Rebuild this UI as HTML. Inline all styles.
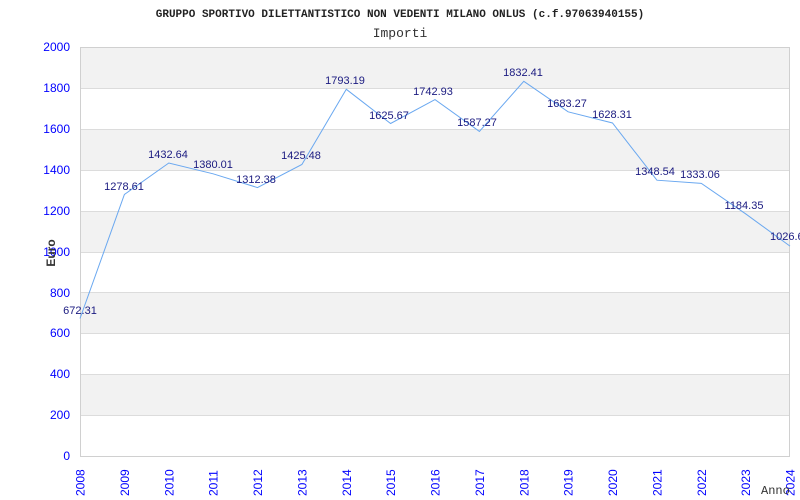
<!DOCTYPE html>
<html><head><style>body{margin:0;background:#fff}svg{display:block}</style></head><body>
<svg width="800" height="500" xmlns="http://www.w3.org/2000/svg">
<rect width="800" height="500" fill="#fff"/>
<g fill="#f2f2f2">
<rect x="80" y="47" width="710" height="41"/>
<rect x="80" y="129" width="710" height="41"/>
<rect x="80" y="211" width="710" height="41"/>
<rect x="80" y="292" width="710" height="41"/>
<rect x="80" y="374" width="710" height="41"/>
</g>
<g stroke="#dcdcdc" stroke-width="1">
<line x1="80" y1="88.5" x2="790" y2="88.5"/><line x1="80" y1="129.5" x2="790" y2="129.5"/>
<line x1="80" y1="170.5" x2="790" y2="170.5"/><line x1="80" y1="211.5" x2="790" y2="211.5"/>
<line x1="80" y1="252.5" x2="790" y2="252.5"/><line x1="80" y1="292.5" x2="790" y2="292.5"/>
<line x1="80" y1="333.5" x2="790" y2="333.5"/><line x1="80" y1="374.5" x2="790" y2="374.5"/>
<line x1="80" y1="415.5" x2="790" y2="415.5"/>
</g>
<rect x="80.5" y="47.5" width="709" height="409" fill="none" stroke="#d0d0d0"/>
<text x="400" y="17" text-anchor="middle" font-family="Liberation Mono,monospace" font-size="11" font-weight="bold" fill="#222">GRUPPO SPORTIVO DILETTANTISTICO NON VEDENTI MILANO ONLUS (c.f.97063940155)</text>
<text x="400" y="37" text-anchor="middle" font-family="Liberation Mono,monospace" font-size="13" fill="#333">Importi</text>
<g font-family="Liberation Sans,sans-serif" font-size="12" fill="#0000ff" text-anchor="end">
<text x="70" y="51">2000</text><text x="70" y="92">1800</text><text x="70" y="133">1600</text>
<text x="70" y="174">1400</text><text x="70" y="215">1200</text><text x="70" y="256">1000</text>
<text x="70" y="297">800</text><text x="70" y="337">600</text><text x="70" y="378">400</text>
<text x="70" y="419">200</text><text x="70" y="460">0</text>
</g>
<text transform="translate(55,253) rotate(-90)" text-anchor="middle" font-family="Liberation Sans,sans-serif" font-size="12" font-weight="bold" fill="#333">Euro</text>
<g font-family="Liberation Sans,sans-serif" font-size="12" fill="#0000ff">
<text transform="translate(84.5,496) rotate(-90)">2008</text>
<text transform="translate(128.9,496) rotate(-90)">2009</text>
<text transform="translate(173.3,496) rotate(-90)">2010</text>
<text transform="translate(217.6,496) rotate(-90)">2011</text>
<text transform="translate(262,496) rotate(-90)">2012</text>
<text transform="translate(306.4,496) rotate(-90)">2013</text>
<text transform="translate(350.8,496) rotate(-90)">2014</text>
<text transform="translate(395.1,496) rotate(-90)">2015</text>
<text transform="translate(439.5,496) rotate(-90)">2016</text>
<text transform="translate(483.9,496) rotate(-90)">2017</text>
<text transform="translate(528.3,496) rotate(-90)">2018</text>
<text transform="translate(572.6,496) rotate(-90)">2019</text>
<text transform="translate(617,496) rotate(-90)">2020</text>
<text transform="translate(661.4,496) rotate(-90)">2021</text>
<text transform="translate(705.8,496) rotate(-90)">2022</text>
<text transform="translate(750.1,496) rotate(-90)">2023</text>
<text transform="translate(794.5,496) rotate(-90)">2024</text>
</g>
<text x="761" y="494" font-family="Liberation Mono,monospace" font-size="12" fill="#333">Anno</text>
<polyline fill="none" stroke="#6aa8f0" stroke-width="1" points="80,318.5 124.4,194.5 168.8,163 213.1,173.8 257.5,187.6 301.9,164.5 346.3,89.3 390.6,123.5 435,99.6 479.4,131.4 523.8,81.3 568.1,111.8 612.5,123 656.9,180.2 701.3,183.4 745.6,213.8 790,246.1"/>
<g font-family="Liberation Sans,sans-serif" font-size="11" fill="#1a1a80" text-anchor="middle">
<text x="80" y="314">672.31</text>
<text x="124" y="190">1278.61</text>
<text x="168" y="158">1432.64</text>
<text x="213" y="168">1380.01</text>
<text x="256" y="183">1312.38</text>
<text x="301" y="159">1425.48</text>
<text x="345" y="84">1793.19</text>
<text x="389" y="119">1625.67</text>
<text x="433" y="95">1742.93</text>
<text x="477" y="126">1587.27</text>
<text x="523" y="76">1832.41</text>
<text x="567" y="107">1683.27</text>
<text x="612" y="118">1628.31</text>
<text x="655" y="175">1348.54</text>
<text x="700" y="178">1333.06</text>
<text x="744" y="209">1184.35</text>
<text x="770" y="240" text-anchor="start">1026.6</text>
</g>
</svg>
</body></html>
